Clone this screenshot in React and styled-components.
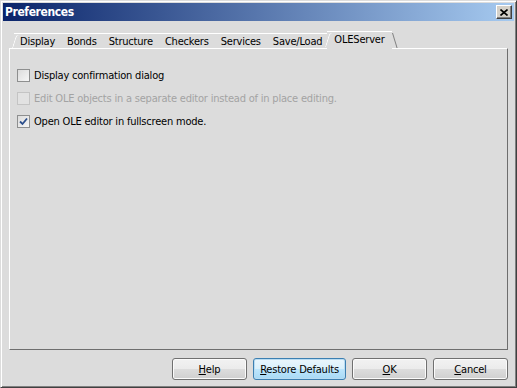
import styled, { createGlobalStyle } from 'styled-components'

const GlobalStyle = createGlobalStyle`
  html, body {
    margin: 0;
    padding: 0;
    background: #dcdcdc;
  }
  body {
    font-family: 'DejaVu Sans Condensed', 'Liberation Sans', sans-serif;
    font-size: 11px;
    letter-spacing: -0.2px;
  }
`

const Window = styled.div`
  width: 517px;
  height: 388px;
  box-sizing: border-box;
  display: flex;
  flex-direction: column;
  background: #dcdcdc;
  border-top: 1px solid #dcdcdc;
  border-left: 1px solid #dcdcdc;
  border-right: 1px solid #404040;
  border-bottom: 1px solid #404040;
  box-shadow: inset 1px 1px 0 #ffffff, inset -1px -1px 0 #808080;
  padding: 2px;
`
const TitleBar = styled.div`
  height: 18px;
  display: flex;
  align-items: center;
  justify-content: space-between;
  padding: 0 2px 0 2px;
  background: linear-gradient(to right, #0a246a, #a6caf0);
`
const Title = styled.span`
  color: white;
  font-family: 'DejaVu Sans Condensed', 'Liberation Sans', sans-serif;
  font-weight: bold;
  font-size: 12px;
  letter-spacing: -0.4px;
`
const CloseButton = styled.div`
  width: 16px;
  height: 14px;
  box-sizing: border-box;
  display: flex;
  align-items: center;
  justify-content: center;
  background: #d4d0c8;
  border-top: 1px solid #ffffff;
  border-left: 1px solid #ffffff;
  border-right: 1px solid #404040;
  border-bottom: 1px solid #404040;
  box-shadow: inset -1px -1px 0 #808080;
`
const Body = styled.div`
  flex: 1;
  display: flex;
  flex-direction: column;
  padding: 10px 6px 5px 6px;
`
const TabStrip = styled.div`
  display: flex;
  align-items: flex-end;
  height: 17px;
  padding-left: 5px;
  position: relative;
  z-index: 1;
`
const Tab = styled.div`
  position: relative;
  height: ${(p) => (p.$selected ? '18px' : '15px')};
  margin-bottom: ${(p) => (p.$selected ? '-1px' : '0')};
  box-sizing: border-box;
  display: flex;
  align-items: center;
  padding: ${(p) => (p.$selected ? '0 7px 2px 7px' : '0 6px 0 6px')};
  margin-left: ${(p) => (p.$selected ? '-1px' : '0')};
  border-top: 1px solid #ffffff;
  background: #dcdcdc;
  color: #000;
  white-space: nowrap;
  &::after {
    content: ${(p) => (p.$last ? 'none' : "''")};
    position: absolute;
    right: -1px;
    top: 1px;
    bottom: 1px;
    width: 3px;
    border-right: 1px solid #808080;
    transform: skewX(17deg);
    transform-origin: top right;
  }
  &::before {
    content: ${(p) => (p.$first || p.$selected ? "''" : 'none')};
    position: absolute;
    left: -2px;
    top: 1px;
    bottom: ${(p) => (p.$selected ? '2px' : '0')};
    width: 3px;
    border-left: 1px solid #ffffff;
    border-top-left-radius: 3px;
    transform: skewX(-17deg);
    transform-origin: bottom left;
  }
`
const Panel = styled.div`
  flex: 1;
  box-sizing: border-box;
  border-top: 1px solid #ffffff;
  border-left: 1px solid #ffffff;
  border-right: 1px solid #6e6e6e;
  border-bottom: 1px solid #6e6e6e;
  padding: 20px 7px;
  display: flex;
  flex-direction: column;
  gap: 10px;
`
const CheckRow = styled.label`
  display: flex;
  align-items: center;
  gap: 4px;
  height: 13px;
  color: ${(p) => (p.$disabled ? '#a3a3a3' : '#000')};
`
const Box = styled.span`
  width: 13px;
  height: 13px;
  box-sizing: border-box;
  display: flex;
  align-items: center;
  justify-content: center;
  border: 1px solid ${(p) => (p.$disabled ? '#c4c4c4' : '#8e8f8f')};
  background: ${(p) =>
    p.$disabled ? '#e2e2e2' : 'linear-gradient(135deg, #dcdcdc, #f6f6f6)'};
`
const ButtonRow = styled.div`
  display: flex;
  justify-content: flex-end;
  gap: 6px;
  margin-top: 8px;
`
const Button = styled.button`
  height: 22px;
  width: ${(p) => (p.$wide ? '93px' : '75px')};
  box-sizing: border-box;
  font-family: inherit;
  font-size: 11px;
  letter-spacing: -0.2px;
  color: #000;
  border-radius: 3px;
  padding: 0 4px;
  border: 1px solid ${(p) => (p.$focused ? '#3c7fb1' : '#707070')};
  box-shadow: ${(p) => (p.$focused ? 'inset 0 0 0 1px #b9dcf2' : 'inset 0 0 0 1px #fbfbfb')};
  background: ${(p) =>
    p.$focused
      ? 'linear-gradient(#eaf6fd, #d9f0fc 50%, #bee6fd 50%, #a7d9f5)'
      : 'linear-gradient(#f2f2f2, #ebebeb 50%, #dddddd 50%, #cfcfcf)'};
  u {
    text-decoration: underline;
  }
`

function CheckMark() {
  return (
    <svg width='9' height='9' viewBox='0 0 9 9'>
      <path d='M1 4.5 L3.5 7 L8 1.5' fill='none' stroke='#2c4f8c' strokeWidth='1.8' />
    </svg>
  )
}

function Check({ label, checked, disabled }) {
  return (
    <CheckRow $disabled={disabled}>
      <Box $disabled={disabled}>{checked && <CheckMark />}</Box>
      {label}
    </CheckRow>
  )
}

const tabs = ['Display', 'Bonds', 'Structure', 'Checkers', 'Services', 'Save/Load']

export default function App() {
  return (
    <>
      <GlobalStyle />
      <Window>
        <TitleBar>
          <Title>Preferences</Title>
          <CloseButton>
            <svg width='8' height='7' viewBox='0 0 8 7'>
              <path d='M0.5 0.5 L7.5 6.5 M7.5 0.5 L0.5 6.5' stroke='#000' strokeWidth='1.6' />
            </svg>
          </CloseButton>
        </TitleBar>
        <Body>
          <TabStrip>
            {tabs.map((t, i) => (
              <Tab key={t} $first={i === 0} $last={i === tabs.length - 1}>{t}</Tab>
            ))}
            <Tab $selected>OLEServer</Tab>
          </TabStrip>
          <Panel>
            <Check label='Display confirmation dialog' />
            <Check label='Edit OLE objects in a separate editor instead of in place editing.' disabled />
            <Check label='Open OLE editor in fullscreen mode.' checked />
          </Panel>
          <ButtonRow>
            <Button><u>H</u>elp</Button>
            <Button $wide $focused><u>R</u>estore Defaults</Button>
            <Button><u>O</u>K</Button>
            <Button><u>C</u>ancel</Button>
          </ButtonRow>
        </Body>
      </Window>
    </>
  )
}
